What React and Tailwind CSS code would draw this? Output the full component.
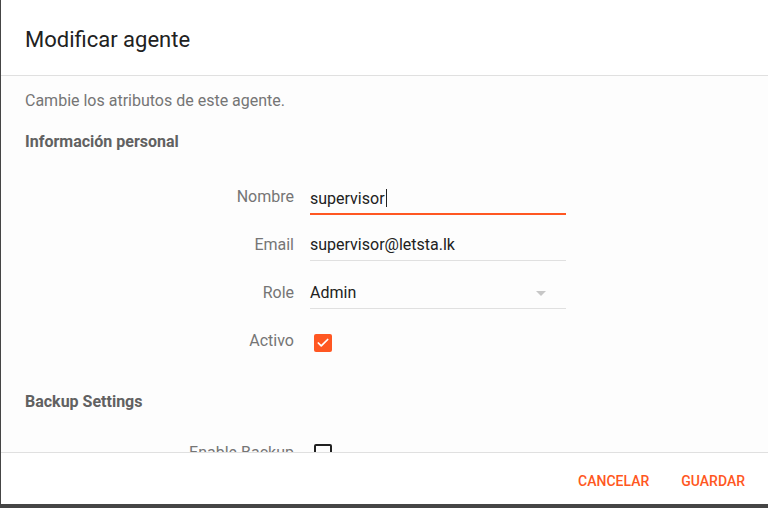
import { Check } from "lucide-react";

const font = { fontFamily: "Roboto, 'Noto Sans', sans-serif" };

function Field({ label, children }) {
  return (
    <div className="flex h-12 items-center">
      <div className="w-[285px] pr-4 text-right text-[16px] text-[#757575]">{label}</div>
      {children}
    </div>
  );
}

export default function App() {
  return (
    <div style={font} className="flex h-[508px] w-[768px] flex-col bg-[#454545] pl-px pb-[4px]">
      <div className="flex min-h-0 flex-1 flex-col bg-white">
        <div className="flex h-[76px] flex-none items-center border-b border-[#e0e0e0] px-6 pt-[4px]">
          <h1 className="text-[22px] text-[#212121]">Modificar agente</h1>
        </div>

        <div className="min-h-0 flex-1 overflow-hidden bg-[#fdfdfd] px-6 pt-[15px]">
          <p className="text-[16px] leading-5 text-[#757575]">Cambie los atributos de este agente.</p>
          <h2 className="mt-[21px] text-[16px] font-bold leading-5 text-[#616161]">Información personal</h2>

          <div className="mt-[21px]">
            <Field label="Nombre">
              <div className="w-[256px] border-b-2 border-[#ff5722] pb-[4px] pt-[6px] text-[16px] leading-5 text-[#212121]">
                supervisor<span className="ml-px inline-block h-[18px] w-px translate-y-[3px] bg-[#212121]"></span>
              </div>
            </Field>
            <Field label="Email">
              <div className="w-[256px] border-b border-[#e0e0e0] pb-[5px] pt-[6px] text-[16px] leading-5 text-[#212121]">
                supervisor@letsta.lk
              </div>
            </Field>
            <Field label="Role">
              <div className="flex w-[256px] items-center justify-between border-b border-[#e0e0e0] pb-[5px] pt-[6px] text-[16px] leading-5 text-[#212121]">
                <span>Admin</span>
                <span className="mr-[20px] h-0 w-0 border-x-[5px] border-t-[5px] border-x-transparent border-t-[#c7c7c7]"></span>
              </div>
            </Field>
            <Field label="Activo">
              <div className="ml-[4px] mt-[4px] flex h-[18px] w-[18px] items-center justify-center rounded-[2px] bg-[#ff5722]">
                <Check size={14} strokeWidth={3} color="#ffffff" />
              </div>
            </Field>
          </div>

          <h2 className="mt-[27px] text-[16px] font-bold leading-5 text-[#616161]">Backup Settings</h2>

          <div className="mt-[29px] flex items-center">
            <div className="w-[285px] pr-4 text-right text-[16px] text-[#757575]">Enable Backup</div>
            <div className="ml-[4px] h-[18px] w-[18px] rounded-[2px] border-2 border-[#212121]"></div>
          </div>
        </div>

        <div className="flex h-[52px] flex-none items-center justify-end gap-8 border-t border-[#e0e0e0] bg-white pr-[23px] pt-[6px]">
          <button className="text-[14px] font-medium text-[#ff5722]">CANCELAR</button>
          <button className="text-[14px] font-medium text-[#ff5722]">GUARDAR</button>
        </div>
      </div>
    </div>
  );
}
